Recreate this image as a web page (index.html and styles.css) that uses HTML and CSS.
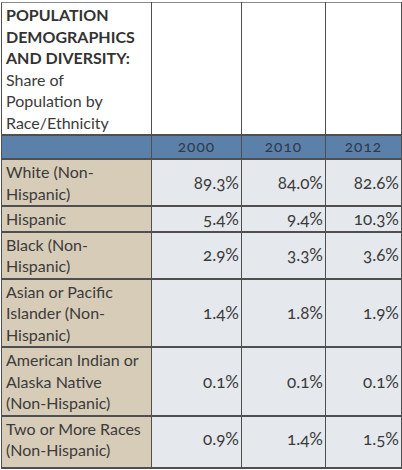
FILE: index.html
```html
<!DOCTYPE html>
<html lang="en">
<head>
    <meta charset="UTF-8">
    <meta name="viewport" content="width=device-width, initial-scale=1.0">
    <title>Population Demographics and Diversity</title>
    <link rel="stylesheet" href="styles.css">
</head>
<body>
    <table class="demo-table">
        <colgroup>
            <col class="col-label">
            <col class="col-2000">
            <col class="col-2010">
            <col class="col-2012">
        </colgroup>
        <thead>
            <tr class="title-row">
                <th class="title"><strong>POPULATION<br>DEMOGRAPHICS<br>AND DIVERSITY:</strong><br>Share of<br>Population by<br>Race/Ethnicity</th>
                <th></th>
                <th></th>
                <th></th>
            </tr>
            <tr class="year-row">
                <th></th>
                <th>2000</th>
                <th>2010</th>
                <th>2012</th>
            </tr>
        </thead>
        <tbody>
            <tr>
                <td class="label">White (Non-<br>Hispanic)</td>
                <td>89.3%</td>
                <td>84.0%</td>
                <td>82.6%</td>
            </tr>
            <tr>
                <td class="label">Hispanic</td>
                <td>5.4%</td>
                <td>9.4%</td>
                <td>10.3%</td>
            </tr>
            <tr>
                <td class="label">Black (Non-<br>Hispanic)</td>
                <td>2.9%</td>
                <td>3.3%</td>
                <td>3.6%</td>
            </tr>
            <tr>
                <td class="label">Asian or Pacific<br>Islander (Non-<br>Hispanic)</td>
                <td>1.4%</td>
                <td>1.8%</td>
                <td>1.9%</td>
            </tr>
            <tr>
                <td class="label">American Indian or<br>Alaska Native<br>(Non-Hispanic)</td>
                <td>0.1%</td>
                <td>0.1%</td>
                <td>0.1%</td>
            </tr>
            <tr class="last-row">
                <td class="label">Two or More Races<br>(Non-Hispanic)</td>
                <td>0.9%</td>
                <td>1.4%</td>
                <td>1.5%</td>
            </tr>
        </tbody>
    </table>
</body>
</html>
```

FILE: styles.css
```css
body {
    margin: 0;
    padding: 2px 0 0 1px;
    background-color: #ffffff;
    font-family: Lato, "Open Sans", sans-serif;
    color: #3b3b3b;
}

.demo-table {
    width: 400px;
    border-collapse: collapse;
    table-layout: fixed;
    font-size: 16px;
    line-height: 21.5px;
    font-variant-numeric: oldstyle-nums;
}

.col-label { width: 150px; }
.col-2000 { width: 90px; }
.col-2010 { width: 84px; }
.col-2012 { width: 76px; }

.demo-table th,
.demo-table td {
    border: 1px solid #4f4f4f;
    border-bottom-width: 2px;
    padding: 1px 2px 1px 4px;
}

.title-row th {
    height: 128px;
    background-color: #ffffff;
    border-top-color: #8a8a8a;
    text-align: left;
    vertical-align: top;
    font-weight: normal;
}

.title strong {
    font-weight: bold;
    color: #333333;
}

.year-row th {
    height: 22px;
    padding: 0;
    background-color: #5b80aa;
    font-size: 15.5px;
    font-weight: normal;
    letter-spacing: 1px;
    color: #2f3a47;
    text-align: center;
}

tbody td {
    background-color: #e5e9ed;
    text-align: right;
    vertical-align: middle;
    padding-right: 2px;
    font-size: 17px;
}

tbody td.label {
    background-color: #d7ccb8;
    text-align: left;
    vertical-align: top;
    white-space: nowrap;
    font-size: 16px;
}

.last-row td {
    padding-bottom: 6px;
}
```
